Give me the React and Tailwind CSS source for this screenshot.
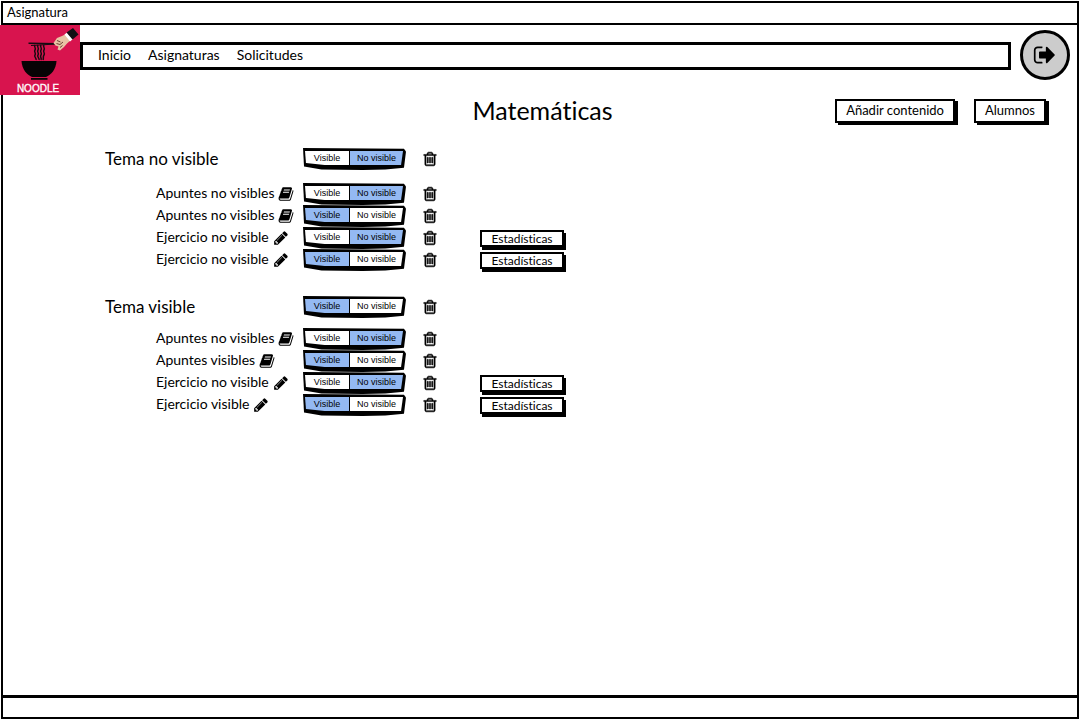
import { useState } from "react";

const PATHS = {
  trash:
    "M704 736v576q0 14-9 23t-23 9h-64q-14 0-23-9t-9-23v-576q0-14 9-23t23-9h64q14 0 23 9t9 23zm256 0v576q0 14-9 23t-23 9h-64q-14 0-23-9t-9-23v-576q0-14 9-23t23-9h64q14 0 23 9t9 23zm256 0v576q0 14-9 23t-23 9h-64q-14 0-23-9t-9-23v-576q0-14 9-23t23-9h64q14 0 23 9t9 23zm128 724v-948h-896v948q0 22 7 40.5t14.5 27 10.5 8.5h832q3 0 10.5-8.5t14.5-27 7-40.5zm-672-1076h448l-48-117q-7-9-17-11h-317q-10 2-17 11zm928 32v64q0 14-9 23t-23 9h-96v948q0 83-47 143.5t-113 60.5h-832q-66 0-113-58.5t-47-141.5v-952h-96q-14 0-23-9t-9-23v-64q0-14 9-23t23-9h309l70-167q15-37 54-63t79-26h320q40 0 79 26t54 63l70 167h309q14 0 23 9t9 23z",
  pencil:
    "M491 1536l91-91-235-235-91 91v107h128v128h107zm523-928q0-22-22-22-10 0-17 7l-542 542q-7 7-7 17 0 22 22 22 10 0 17-7l542-542q7-7 7-17zm-54-192l416 416-832 832h-416v-416zm683 96q0 53-37 90l-166 166-416-416 166-165q36-38 90-38 53 0 91 38l235 234q37 39 37 91z",
  book:
    "M1703 478q40 57 18 129l-275 906q-19 64-76.5 107.5t-122.5 43.5h-923q-77 0-148.5-53.5t-99.5-131.5q-24-67-2-127 0-4 3-27t4-37q1-8-3-21.5t-3-19.5q2-11 8-21t16.5-23.5 16.5-23.5q23-38 45-91.5t30-91.5q3-10 .5-30t-.5-28q3-11 17-28t17-23q21-36 42-92t25-90q1-9-2.5-32t.5-28q4-13 22-30.5t22-22.5q19-26 42.5-84.5t27.5-96.5q1-8-3-25.5t-2-26.5q2-8 9-18t18-23 17-21q8-12 16.5-30.5t15-35 16-36 19.5-32 26.5-23.5 36-11.5 47.5 5.5l-1 3q38-9 51-9h761q74 0 114 56t18 130l-274 906q-36 119-71.5 153.5t-128.5 34.5h-869q-27 0-38 15-11 16-1 43 24 70 144 70h923q29 0 56-15.5t35-41.5l300-987q7-22 5-57 38 15 59 43zm-1064 2q-4 13 2 22.5t20 9.5h608q13 0 25.5-9.5t16.5-22.5l21-64q4-13-2-22.5t-20-9.5h-608q-13 0-25.5 9.5t-16.5 22.5zm-83 256q-4 13 2 22.5t20 9.5h608q13 0 25.5-9.5t16.5-22.5l21-64q4-13-2-22.5t-20-9.5h-608q-13 0-25.5 9.5t-16.5 22.5z",
  signOut:
    "M704 1440q0 4 1 20t.5 26.5-3 23.5-10 19.5-20.5 6.5h-320q-119 0-203.5-84.5t-84.5-203.5v-704q0-119 84.5-203.5t203.5-84.5h320q13 0 22.5 9.5t9.5 22.5q0 4 1 20t.5 26.5-3 23.5-10 19.5-20.5 6.5h-320q-66 0-113 47t-47 113v704q0 66 47 113t113 47h312l11.5 1 11.5 3 8 5.5 7 9 2 13.5zm928-544q0 26-19 45l-544 544q-19 19-45 19t-45-19-19-45v-288h-448q-26 0-45-19t-19-45v-384q0-26 19-45t45-19h448v-288q0-26 19-45t45-19 45 19l544 544q19 19 19 45z",
};

function Icon({ name, className = "size-4" }) {
  return (
    <svg viewBox="0 0 1792 1792" fill="currentColor" aria-hidden="true" className={`shrink-0 ${className}`}>
      <path d={PATHS[name]} />
    </svg>
  );
}

function Logo() {
  return (
    <svg viewBox="0 0 80 70" role="img" aria-label="Noodle" className="h-[70px] w-20">
      <rect width="80" height="70" fill="#d8144e" />
      <g stroke="#160a10" fill="none">
        <path d="M28.500 18.300 56 18.700" strokeWidth="1.500" />
        <path d="M31 20.500 56 19" strokeWidth="1" />
        <path
          d="M35 20c-1.500 2 1.500 3 0 5s1.500 3 0 5 2 3 1 5M38 20c-1.500 2 1.500 3 0 5s1.500 3 0 5 2 3 1 5M41 20c-1.500 2 1.500 3 0 5s1.500 3 0 5 1 3 0 5M44 20c-1.500 2 1.500 3 0 5s1.500 3 0 5 0 3-1 5"
          strokeWidth="1.500"
        />
      </g>
      <path d="M21.500 36H56.500C56 44.500 51 50 46 52H32C27 50 22 44.500 21.500 36Z" fill="#080305" />
      <path d="M31 53H47.500V54.800H31Z" fill="#080305" />
      <path d="M53.500 18 57 13 62 11 66 9 71 15 67 18.500 64 22 60 25.500 57.500 24.500 58.500 21.500 55.500 20.500Z" fill="#e8c3a4" />
      <path d="M57 15.500 60.500 17M56.500 18.500 60 19.500 63 17M60 22.500 62.500 20.500" stroke="#6d4335" strokeWidth="1" fill="none" />
      <path d="M64.500 9.500 67 7.500 73 14 70 16.500Z" fill="#fff" />
      <path d="M66.500 7.500 73 3 78.500 9.500 72.500 14.500Z" fill="#101014" />
      <text
        x="38"
        y="67"
        textAnchor="middle"
        fill="#fff"
        fontFamily="Liberation Sans, sans-serif"
        fontSize="10"
        stroke="#fff"
        strokeWidth=".3"
      >
        NOODLE
      </text>
    </svg>
  );
}

function Toggle({ initial, label }) {
  const [visible, setVisible] = useState(initial);
  return (
    <div
      role="group"
      aria-label={`Visibilidad de ${label}`}
      className="h-[22px] w-[103px] bg-black pt-[3px] pl-[2px] [clip-path:polygon(0_0,98%_3%,100%_16%,98%_90%,80%_98%,58%_100%,18%_98%,1%_84%)]"
    >
      <div className="flex h-[14px] w-[98px] gap-px font-['Liberation_Sans',sans-serif] text-[9px] leading-[14px] [clip-path:polygon(0_0,100%_0,98%_100%,20%_100%,1%_86%)]">
        <button
          type="button"
          aria-pressed={visible}
          onClick={() => setVisible(true)}
          className={`w-11 shrink-0 ${visible ? "bg-[#94b9f2]" : "bg-white"}`}
        >
          Visible
        </button>
        <button
          type="button"
          aria-pressed={!visible}
          onClick={() => setVisible(false)}
          className={`grow whitespace-nowrap ${visible ? "bg-white" : "bg-[#94b9f2]"}`}
        >
          No visible
        </button>
      </div>
    </div>
  );
}

function Controls({ visible, label }) {
  return (
    <>
      <Toggle initial={visible} label={label} />
      <button type="button" aria-label={`Eliminar ${label}`} className="flex w-4 justify-center">
        <Icon name="trash" className="size-4 stroke-black stroke-[60]" />
      </button>
    </>
  );
}

const ROW = "grid h-[22px] grid-cols-[199px_119px_58px_86px] items-center";

const TOPICS = [
  {
    title: "Tema no visible",
    visible: false,
    listGap: "mt-[13px]",
    items: [
      { label: "Apuntes no visibles", icon: "book", visible: false },
      { label: "Apuntes no visibles", icon: "book", visible: true },
      { label: "Ejercicio no visible", icon: "pencil", visible: false, stats: true },
      { label: "Ejercicio no visible", icon: "pencil", visible: true, stats: true },
    ],
  },
  {
    title: "Tema visible",
    visible: true,
    listGap: "mt-[10px]",
    items: [
      { label: "Apuntes no visibles", icon: "book", visible: false },
      { label: "Apuntes visibles", icon: "book", visible: true },
      { label: "Ejercicio no visible", icon: "pencil", visible: false, stats: true },
      { label: "Ejercicio visible", icon: "pencil", visible: true, stats: true },
    ],
  },
];

function Topic({ topic }) {
  return (
    <section>
      <div className={ROW}>
        <h2 className="pb-px pl-px text-[17px] leading-5">{topic.title}</h2>
        <Controls visible={topic.visible} label={topic.title} />
      </div>
      <ul className={topic.listGap}>
        {topic.items.map((item, i) => (
          <li key={i} className={ROW}>
            <div className="flex items-center gap-1 pl-[52px] text-sm leading-[18px] whitespace-nowrap">
              <span className="pb-[3px]">{item.label}</span>
              <Icon name={item.icon} />
            </div>
            <Controls visible={item.visible} label={item.label} />
            {item.stats && (
              <button
                type="button"
                className="mr-[2px] h-[17px] border-2 border-black bg-white text-xs leading-[13px] shadow-[2px_3px_0_#000]"
              >
                Estadísticas
              </button>
            )}
          </li>
        ))}
      </ul>
    </section>
  );
}

function ActionButton({ children }) {
  return (
    <button
      type="button"
      className="h-6 border-2 border-black bg-white px-[9px] pb-px text-[13px] leading-[19px] whitespace-nowrap shadow-[3px_2px_0_#000]"
    >
      {children}
    </button>
  );
}

export default function App() {
  return (
    <div className="flex min-h-screen flex-col bg-white p-px font-[Lato,'Noto_Sans',sans-serif] text-black [font-variant-ligatures:none]">
      <div className="flex grow flex-col border-2 border-black">
        <div className="flex h-[22px] items-center border-b-2 border-black px-1 pb-0.5 text-[13px] leading-[18px]">
          Asignatura
        </div>

        <header className="-ml-[3px] flex h-[70px] items-start">
          <Logo />
          <nav className="mt-[17px] flex h-7 grow items-center gap-[17px] border-[3px] border-black px-[15px] pb-[3px] text-sm leading-[18px]">
            <a href="#inicio">Inicio</a>
            <a href="#asignaturas">Asignaturas</a>
            <a href="#solicitudes">Solicitudes</a>
          </nav>
          <button
            type="button"
            aria-label="Cerrar sesión"
            className="mt-[5px] mr-[7px] ml-[9px] flex size-[50px] shrink-0 items-center justify-center rounded-full border-[3px] border-black bg-[#cccccc]"
          >
            <Icon name="signOut" className="size-6" />
          </button>
        </header>

        <main className="grow">
          <div className="grid grid-cols-[1fr_auto_1fr] items-center pt-px pr-[31px]">
            <h1 className="col-start-2 pb-[2px] pl-9 text-[25px] leading-7">Matemáticas</h1>
            <div className="flex justify-end gap-[19px]">
              <ActionButton>Añadir contenido</ActionButton>
              <ActionButton>Alumnos</ActionButton>
            </div>
          </div>
          <div className="mt-[22px] flex flex-col gap-[25px] pl-[101px]">
            {TOPICS.map((topic) => (
              <Topic key={topic.title} topic={topic} />
            ))}
          </div>
        </main>

        <footer className="h-[22px] border-t-[3px] border-black" />
      </div>
    </div>
  );
}
